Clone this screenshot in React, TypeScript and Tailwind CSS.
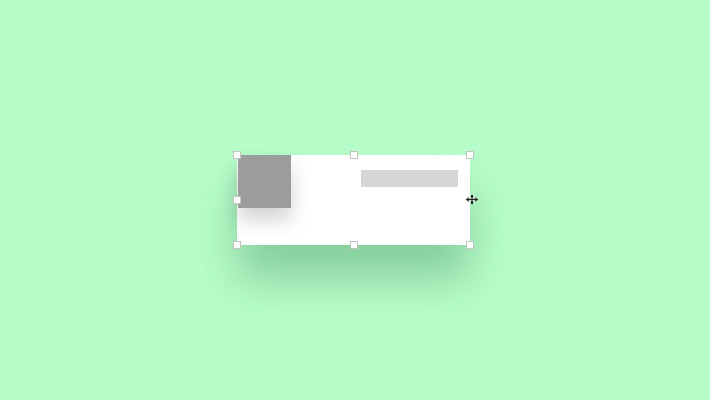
import React from 'react';

const Handle = ({ className }: { className: string }) => (
  <div className={`absolute w-[8px] h-[8px] bg-white border border-[#c4c4c4] ${className}`} />
);

const ResizeCursor = () => (
  <svg width="14" height="9" viewBox="0 0 14 9" className="absolute right-[-9px] top-[40px]">
    <rect x="6" y="0" width="2" height="9" fill="#222" />
    <path d="M0.5 4.5 L3.8 1.5 L3.8 3.4 L10.2 3.4 L10.2 1.5 L13.5 4.5 L10.2 7.5 L10.2 5.6 L3.8 5.6 L3.8 7.5 Z" fill="#222" stroke="#fff" strokeWidth="0.6" />
  </svg>
);

export default function App() {
  return (
    <div className="w-full h-screen bg-[#b7fdca] flex items-center justify-center">
      <div className="relative ml-[-3px] w-[233px] h-[90px] bg-white shadow-[0_34px_44px_rgba(30,110,60,0.32)] flex items-start pl-px">
        <div className="w-[53px] h-[53px] bg-[#9c9c9c] shadow-[0_12px_20px_rgba(0,0,0,0.18)]" />
        <div className="ml-[70px] mt-[15px] w-[97px] h-[17px] bg-[#d6d6d6]" />
        <Handle className="left-[-4px] top-[-4px]" />
        <Handle className="left-[113px] top-[-4px]" />
        <Handle className="right-[-4px] top-[-4px]" />
        <Handle className="left-[-4px] top-[41px]" />
        <Handle className="left-[-4px] bottom-[-4px]" />
        <Handle className="left-[113px] bottom-[-4px]" />
        <Handle className="right-[-4px] bottom-[-4px]" />
        <ResizeCursor />
      </div>
    </div>
  );
}
